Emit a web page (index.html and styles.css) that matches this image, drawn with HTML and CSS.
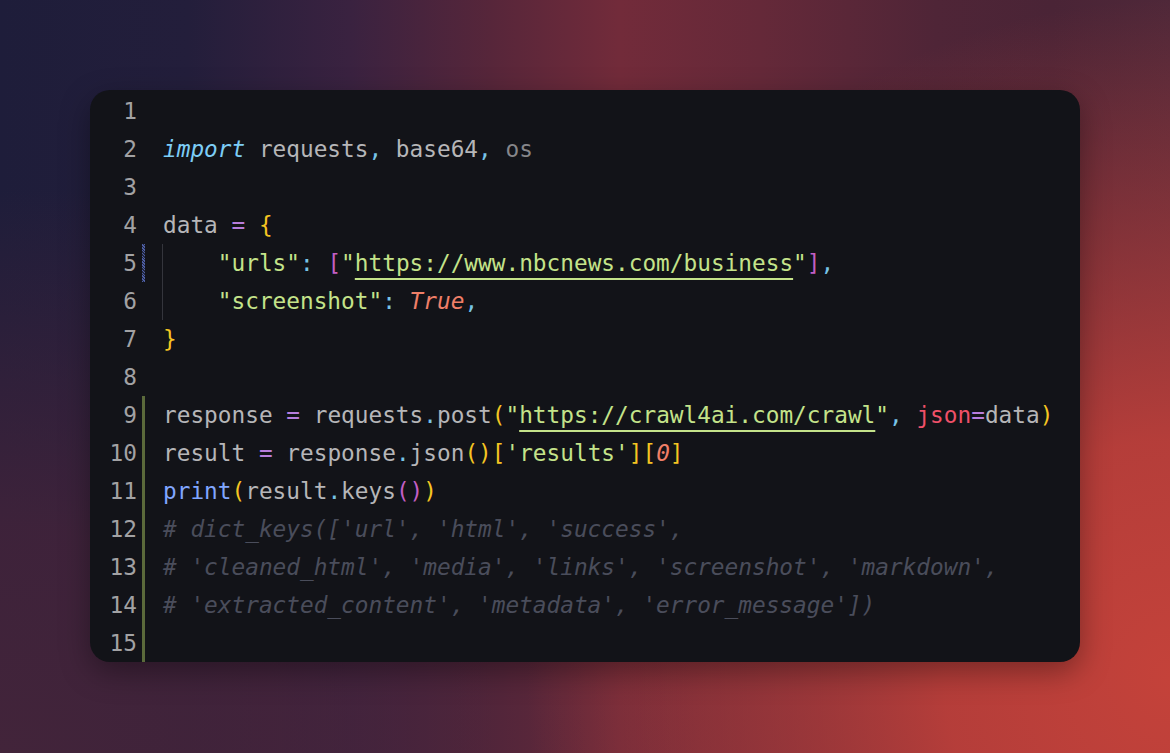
FILE: index.html
```html
<!DOCTYPE html>
<html>
<head>
<meta charset="utf-8">
<link rel="stylesheet" href="styles.css">
</head>
<body>
<div class="stage">
  <div class="card">
    <div class="row"><span class="num">1</span><span class="gut"></span><span class="code"></span></div>
    <div class="row"><span class="num">2</span><span class="gut"></span><span class="code"><span class="kw">import</span> requests<span class="p">,</span> base64<span class="p">,</span> <span class="dim">os</span></span></div>
    <div class="row"><span class="num">3</span><span class="gut"></span><span class="code"></span></div>
    <div class="row"><span class="num">4</span><span class="gut"></span><span class="code">data <span class="op">=</span> <span class="y">{</span></span></div>
    <div class="row"><span class="num">5</span><span class="gut"><span class="mk dot"></span></span><span class="code"><span class="ind">    </span><span class="s">"urls"</span><span class="p">:</span> <span class="m">[</span><span class="s">"<span class="u">https://www.nbcnews.com/business</span>"</span><span class="m">]</span><span class="p">,</span></span></div>
    <div class="row"><span class="num">6</span><span class="gut"></span><span class="code"><span class="ind">    </span><span class="s">"screenshot"</span><span class="p">:</span> <span class="c">True</span><span class="p">,</span></span></div>
    <div class="row"><span class="num">7</span><span class="gut"></span><span class="code"><span class="y">}</span></span></div>
    <div class="row"><span class="num">8</span><span class="gut"></span><span class="code"></span></div>
    <div class="row"><span class="num">9</span><span class="gut"><span class="mk add"></span></span><span class="code">response <span class="op">=</span> requests<span class="p">.</span>post<span class="y">(</span><span class="s">"<span class="u">https://crawl4ai.com/crawl</span>"</span><span class="p">,</span> <span class="r">json</span><span class="op">=</span>data<span class="y">)</span></span></div>
    <div class="row"><span class="num">10</span><span class="gut"><span class="mk add"></span></span><span class="code">result <span class="op">=</span> response<span class="p">.</span>json<span class="y">()[</span><span class="s">'results'</span><span class="y">][</span><span class="c">0</span><span class="y">]</span></span></div>
    <div class="row"><span class="num">11</span><span class="gut"><span class="mk add"></span></span><span class="code"><span class="fn">print</span><span class="y">(</span>result<span class="p">.</span>keys<span class="m">()</span><span class="y">)</span></span></div>
    <div class="row"><span class="num">12</span><span class="gut"><span class="mk add"></span></span><span class="code"><span class="cm"># dict_keys(['url', 'html', 'success',</span></span></div>
    <div class="row"><span class="num">13</span><span class="gut"><span class="mk add"></span></span><span class="code"><span class="cm"># 'cleaned_html', 'media', 'links', 'screenshot', 'markdown',</span></span></div>
    <div class="row"><span class="num">14</span><span class="gut"><span class="mk add"></span></span><span class="code"><span class="cm"># 'extracted_content', 'metadata', 'error_message'])</span></span></div>
    <div class="row"><span class="num">15</span><span class="gut"><span class="mk add"></span></span><span class="code"></span></div>
  </div>
</div>
</body>
</html>
```

FILE: styles.css
```css
html, body {
  margin: 0;
  padding: 0;
}
body {
  width: 1170px;
  height: 753px;
  overflow: hidden;
  background:
    radial-gradient(ellipse 55% 90% at 100% 90%, rgba(196, 66, 58, 1) 0%, rgba(192, 64, 58, 0.9) 35%, rgba(192, 64, 58, 0) 100%),
    radial-gradient(ellipse 60% 75% at 0% 100%, rgba(66, 36, 58, 1) 0%, rgba(72, 36, 58, 0.75) 40%, rgba(80, 38, 58, 0) 100%),
    linear-gradient(90deg, #1e1d3a 0%, #231e3b 16%, #3a2240 30%, #57263a 42%, #722b3a 53%, #652939 65%, #4f2537 80%, #4a2436 90%, #4f2839 100%);
}
.stage {
  padding: 90px 90px 0 90px;
}
.card {
  width: 990px;
  height: 572px;
  box-sizing: border-box;
  padding-top: 2px;
  background: #121318;
  border-radius: 20px;
  overflow: hidden;
  box-shadow: 0 10px 30px rgba(0, 0, 0, 0.35);
  font-family: "DejaVu Sans Mono", "Liberation Mono", monospace;
  font-size: 22.75px;
  color: #b6b6b8;
}
.row {
  display: flex;
  height: 38px;
  line-height: 38px;
  white-space: pre;
}
.num {
  width: 47px;
  text-align: right;
  color: #a2a2a4;
  flex: none;
}
.gut {
  width: 26px;
  flex: none;
  display: flex;
}
.mk {
  margin-left: 5px;
  width: 3px;
  height: 100%;
}
.mk.add {
  background: #5b6a3b;
}
.mk.dot {
  background: repeating-linear-gradient(45deg, #4d5ea5 0 1px, #23283f 1px 2px);
}
.code {
  flex: 1;
}
.ind {
  display: inline-block;
  height: 38px;
  vertical-align: top;
  box-sizing: border-box;
  border-left: 1px solid #34353c;
  margin-left: -1px;
}
.kw { color: #7dcdf6; font-style: italic; }
.p { color: #78c3e6; }
.dim { color: #86868a; }
.op { color: #b77ddc; }
.y { color: #f5c522; }
.m { color: #c25fc4; }
.s { color: #c4e38a; }
.u {
  text-decoration: underline;
  text-decoration-thickness: 2px;
  text-underline-offset: 7px;
  text-decoration-color: #c4e38a;
}
.c { color: #ef7f68; font-style: italic; }
.r { color: #ef5068; }
.fn { color: #80a6ff; }
.cm { color: #4a4d5b; font-style: italic; }
```
